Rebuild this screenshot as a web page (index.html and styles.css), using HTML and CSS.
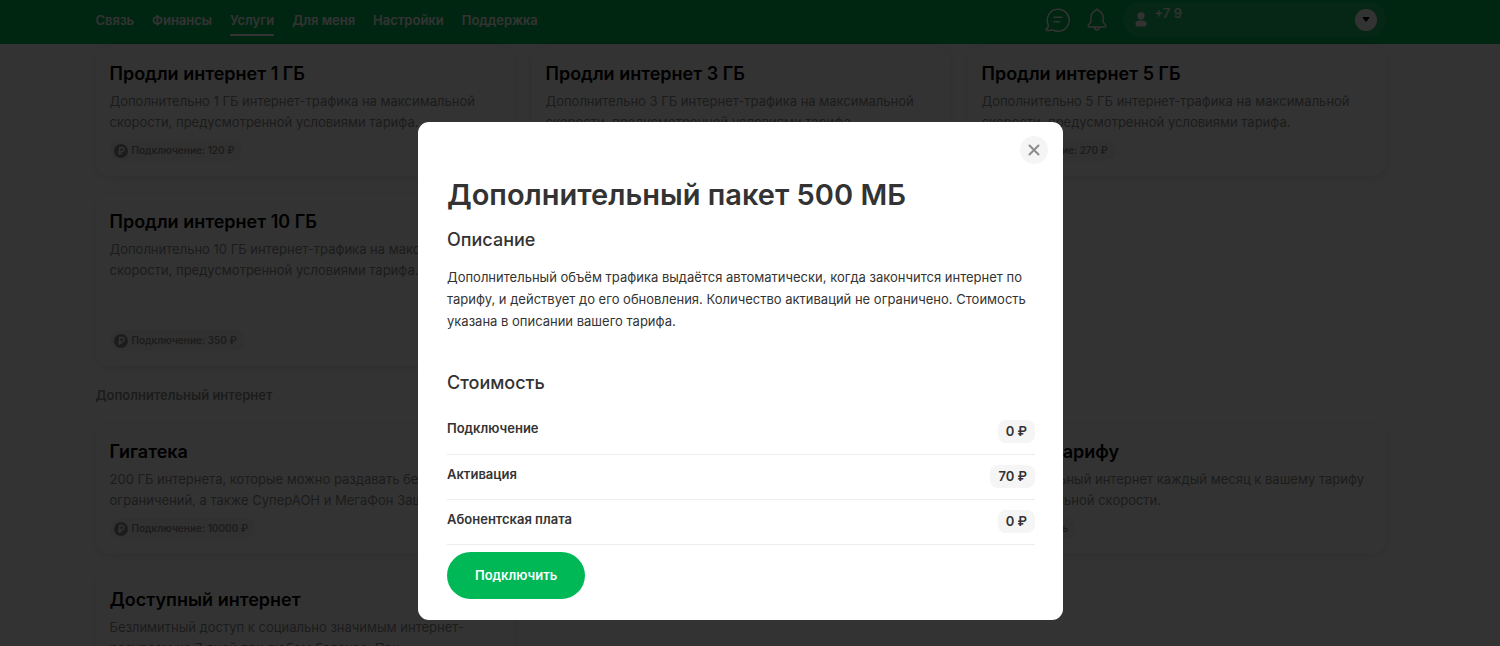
FILE: index.html
```html
<!DOCTYPE html>
<html lang="ru">
<head>
<meta charset="utf-8">
<meta name="viewport" content="width=device-width, initial-scale=1">
<title>Услуги — Дополнительный пакет 500 МБ</title>
<link rel="stylesheet" href="styles.css">
</head>
<body>
<svg class="sprite" aria-hidden="true">
  <symbol id="ruble" viewBox="0 0 14 14">
    <circle cx="7" cy="7" r="7" fill="#8c8c8c"/>
    <path d="M5.700 11V3.500h2.200a2 2 0 0 1 0 4.100H4.200M4.200 9.300h3.900" fill="none" stroke="#fff" stroke-width="1.300"/>
  </symbol>
</svg>
<header class="header">
  <div class="container header-row">
    <nav class="nav" aria-label="Основное меню">
      <a class="nav-link" href="#">Связь</a>
      <a class="nav-link" href="#">Финансы</a>
      <a class="nav-link nav-link-active" href="#" aria-current="page">Услуги</a>
      <a class="nav-link" href="#">Для меня</a>
      <a class="nav-link" href="#">Настройки</a>
      <a class="nav-link" href="#">Поддержка</a>
    </nav>
    <div class="tools">
      <button class="icon-button" type="button" aria-label="Чат">
        <svg width="26" height="26" viewBox="0 0 26 26" fill="none" stroke="#fff" stroke-width="1.500" stroke-linecap="round" stroke-linejoin="round"><path d="M3.100 17.600A11 11 0 1 1 8.500 23.200c-1.700-.7-4.200.7-6.600.2-.9-.2-.9-1-.3-1.500 1.400-1.100 2.100-2.600 1.500-4.300Z"/><path d="M9 10.300h8M9 14.800h5.500"/></svg>
      </button>
      <button class="icon-button" type="button" aria-label="Уведомления">
        <svg width="20" height="24" viewBox="0 0 20 24" fill="none" stroke="#fff" stroke-width="1.500" stroke-linecap="round" stroke-linejoin="round"><path d="M10 1.200c-.8 0-1 .9-1.800 1.500-2.600 1.600-4.300 3.400-4.300 6.800v4.300c0 1.400-2.700 2.300-2.700 4.300 0 .6.300.9.900.9h15.800c.6 0 .9-.3.900-.9 0-2-2.700-2.900-2.700-4.300V9.500c0-3.400-1.700-5.200-4.300-6.800C11 2.100 10.800 1.200 10 1.200ZM7.600 19.300a2.400 2.800 0 0 0 4.800 0"/></svg>
      </button>
      <button class="account" type="button">
        <svg width="12" height="15" viewBox="0 0 12 15" fill="#fff" aria-hidden="true"><circle cx="6" cy="3.800" r="3.600"/><path d="M.5 11.500c0-2 1.500-3 5.500-3s5.500 1 5.500 3c0 2.200-.8 3-2.300 3H2.800c-1.500 0-2.300-.8-2.300-3Z"/></svg>
        <span class="account-phone">+7 9</span>
        <span class="account-arrow"><svg width="8" height="5" viewBox="0 0 8 5" aria-hidden="true"><path d="M1 .5h6L4 4.500Z" fill="#000" stroke="#000" stroke-linejoin="round"/></svg></span>
      </button>
    </div>
  </div>
</header>
<main class="page">
  <section class="cards">
    <article class="card">
      <h3 class="card-title">Продли интернет 1 ГБ</h3>
      <p class="card-text">Дополнительно 1 ГБ интернет-трафика на максимальной скорости, предусмотренной условиями тарифа.</p>
      <span class="tag"><svg class="tag-icon"><use href="#ruble"/></svg>Подключение: 120 ₽</span>
    </article>
    <article class="card">
      <h3 class="card-title">Продли интернет 3 ГБ</h3>
      <p class="card-text">Дополнительно 3 ГБ интернет-трафика на максимальной скорости, предусмотренной условиями тарифа.</p>
      <span class="tag"><svg class="tag-icon"><use href="#ruble"/></svg>Подключение: 200 ₽</span>
    </article>
    <article class="card">
      <h3 class="card-title">Продли интернет 5 ГБ</h3>
      <p class="card-text">Дополнительно 5 ГБ интернет-трафика на максимальной скорости, предусмотренной условиями тарифа.</p>
      <span class="tag"><svg class="tag-icon"><use href="#ruble"/></svg>Подключение: 270 ₽</span>
    </article>
    <article class="card">
      <h3 class="card-title">Продли интернет 10 ГБ</h3>
      <p class="card-text">Дополнительно 10 ГБ интернет-трафика на максимальной скорости, предусмотренной условиями тарифа.</p>
      <span class="tag"><svg class="tag-icon"><use href="#ruble"/></svg>Подключение: 350 ₽</span>
    </article>
    <article class="card">
      <h3 class="card-title">Дополнительный пакет 500 МБ</h3>
      <p class="card-text">Дополнительный объём трафика выдаётся автоматически, когда закончится интернет по тарифу, и действует до его обновления. Количество активаций не ограничено. Стоимость указана в описании вашего тарифа.</p>
      <span class="tag"><svg class="tag-icon"><use href="#ruble"/></svg>Подключение: 0 ₽</span>
    </article>
  </section>
  <h2 class="section-title">Дополнительный интернет</h2>
  <section class="cards">
    <article class="card">
      <h3 class="card-title">Гигатека</h3>
      <p class="card-text">200 ГБ интернета, которые можно раздавать без ограничений, а также СуперАОН и МегаФон Защита.</p>
      <span class="tag"><svg class="tag-icon"><use href="#ruble"/></svg>Подключение: 10000 ₽</span>
    </article>
    <article class="card card-last">
      <h3 class="card-title">Пакет к тарифу</h3>
      <p class="card-text">Дополнительный интернет каждый месяц к вашему тарифу на максимальной скорости.</p>
      <span class="tag"><svg class="tag-icon"><use href="#ruble"/></svg>от 9 ₽ в день</span>
    </article>
    <article class="card">
      <h3 class="card-title">Доступный интернет</h3>
      <p class="card-text">Безлимитный доступ к социально значимым интернет-ресурсам на 7 дней при любом балансе. При</p>
    </article>
  </section>
</main>
<div class="overlay">
  <dialog class="modal" open aria-labelledby="modal-title">
    <button class="modal-close" type="button" aria-label="Закрыть">
      <svg width="12" height="12" viewBox="0 0 12 12" fill="none" stroke="#8c8c8c" stroke-width="2" stroke-linecap="round"><path d="M1.500 1.500l9 9M10.500 1.500l-9 9"/></svg>
    </button>
    <h1 class="modal-title" id="modal-title">Дополнительный пакет 500 МБ</h1>
    <h2 class="modal-heading">Описание</h2>
    <p class="modal-text">Дополнительный объём трафика выдаётся автоматически, когда закончится интернет по тарифу, и действует до его обновления. Количество активаций не ограничено. Стоимость указана в описании вашего тарифа.</p>
    <h2 class="modal-heading">Стоимость</h2>
    <table class="prices">
      <tr><th scope="row">Подключение</th><td><span class="price">0 ₽</span></td></tr>
      <tr><th scope="row">Активация</th><td><span class="price">70 ₽</span></td></tr>
      <tr><th scope="row">Абонентская плата</th><td><span class="price">0 ₽</span></td></tr>
    </table>
    <button class="submit" type="button">Подключить</button>
  </dialog>
</div>
</body>
</html>
```
FILE: styles.css
```css
* {
  box-sizing: border-box;
}

:root {
  --content: 1290px;
  --scrollbar: 19px;
}

body {
  margin: 0;
  height: 100vh;
  overflow: hidden;
  background: #fff;
  color: #000;
  font-family: Inter, "Noto Sans", sans-serif;
  font-size: 13px;
  line-height: 21px;
}

h1, h2, h3, p {
  margin: 0;
}

button {
  border: 0;
  padding: 0;
  background: none;
  font: inherit;
  cursor: pointer;
}

.sprite {
  position: absolute;
  width: 0;
  height: 0;
}

.container {
  width: 100%;
  max-width: var(--content);
  margin: 0 auto;
}

.header {
  height: 44px;
  padding-right: var(--scrollbar);
  background: #00b956;
}

.header-row {
  display: flex;
  justify-content: space-between;
  align-items: flex-start;
}

.nav {
  display: flex;
  gap: 18px;
  padding-top: 6px;
}

.nav-link {
  padding: 4px 0 3px;
  border-bottom: 2px solid transparent;
  color: #fff;
  font-weight: 600;
  text-decoration: none;
}

.nav-link-active {
  border-color: #fff;
}

.tools {
  display: flex;
  align-items: center;
  gap: 16px;
  padding-top: 2px;
}

.icon-button {
  display: flex;
}

.account {
  display: flex;
  align-items: center;
  gap: 8px;
  width: 263px;
  height: 35px;
  padding: 0 9px 0 12px;
  border-radius: 18px;
  background: rgba(255, 255, 255, 0.15);
  color: #fff;
}

.account-phone {
  flex: 1;
  align-self: flex-start;
  padding-top: 1px;
  font-weight: 500;
  text-align: left;
}

.account-arrow {
  display: grid;
  place-items: center;
  width: 22px;
  height: 22px;
  border-radius: 50%;
  background: #fff;
}

.page {
  max-width: calc(var(--content) + var(--scrollbar));
  margin: 0 auto;
  padding: 2px var(--scrollbar) 0 0;
}

.cards {
  display: grid;
  grid-template-columns: repeat(3, 1fr);
  gap: 18px;
}

.card {
  display: flex;
  flex-direction: column;
  align-items: flex-start;
  padding: 15px 14px;
  border-radius: 14px;
  box-shadow: 0 2px 10px rgba(0, 0, 0, 0.1);
}

.card-last {
  grid-column: 3;
}

.card-title {
  margin-bottom: 4px;
  font-size: 18px;
  font-weight: 600;
  line-height: 26px;
}

.card-text {
  margin-bottom: 7px;
  color: #8c8c8c;
}

.tag {
  display: flex;
  align-items: center;
  gap: 4px;
  margin-top: auto;
  padding: 0 8px 0 4px;
  border-radius: 10px;
  background: #f5f5f5;
  color: #8c8c8c;
  font-size: 10px;
  font-weight: 600;
}

.tag-icon {
  width: 14px;
  height: 14px;
}

.section-title {
  margin: 19px 0 18px;
  color: #8c8c8c;
  font-size: 13px;
  font-weight: 600;
  line-height: 21px;
}

.overlay {
  position: fixed;
  inset: 0;
  display: flex;
  justify-content: center;
  align-items: flex-start;
  padding: 122px var(--scrollbar) 0 0;
  background: rgba(0, 0, 0, 0.8);
}

.modal {
  position: relative;
  width: 100%;
  max-width: 645px;
  margin: 0;
  padding: 53px 28px 21px 29px;
  border: 0;
  border-radius: 11px;
  background: #fff;
  color: #333;
}

.modal-close {
  position: absolute;
  top: 14px;
  right: 15px;
  display: grid;
  place-items: center;
  width: 28px;
  height: 28px;
  border-radius: 50%;
  background: #f5f5f5;
}

.modal-title {
  margin-bottom: 12px;
  font-size: 29px;
  font-weight: 600;
  line-height: 40px;
}

.modal-heading {
  margin-bottom: 13px;
  font-size: 18px;
  font-weight: 500;
  line-height: 26px;
}

.modal-text {
  margin-bottom: 38px;
  line-height: 22px;
}

.prices {
  width: 100%;
  border-collapse: collapse;
}

.prices tr {
  height: 45px;
  border-bottom: 1px solid #ededed;
}

.prices th {
  padding: 0 0 5px;
  font-weight: 600;
  text-align: left;
}

.prices td {
  padding: 0;
  text-align: right;
}

.price {
  display: inline-block;
  padding: 1px 8px;
  border-radius: 8px;
  background: #f5f5f5;
  font-weight: 600;
}

.submit {
  display: block;
  height: 47px;
  margin-top: 7px;
  padding: 0 28px;
  border-radius: 24px;
  background: #00b956;
  color: #fff;
  font-weight: 600;
}
```
